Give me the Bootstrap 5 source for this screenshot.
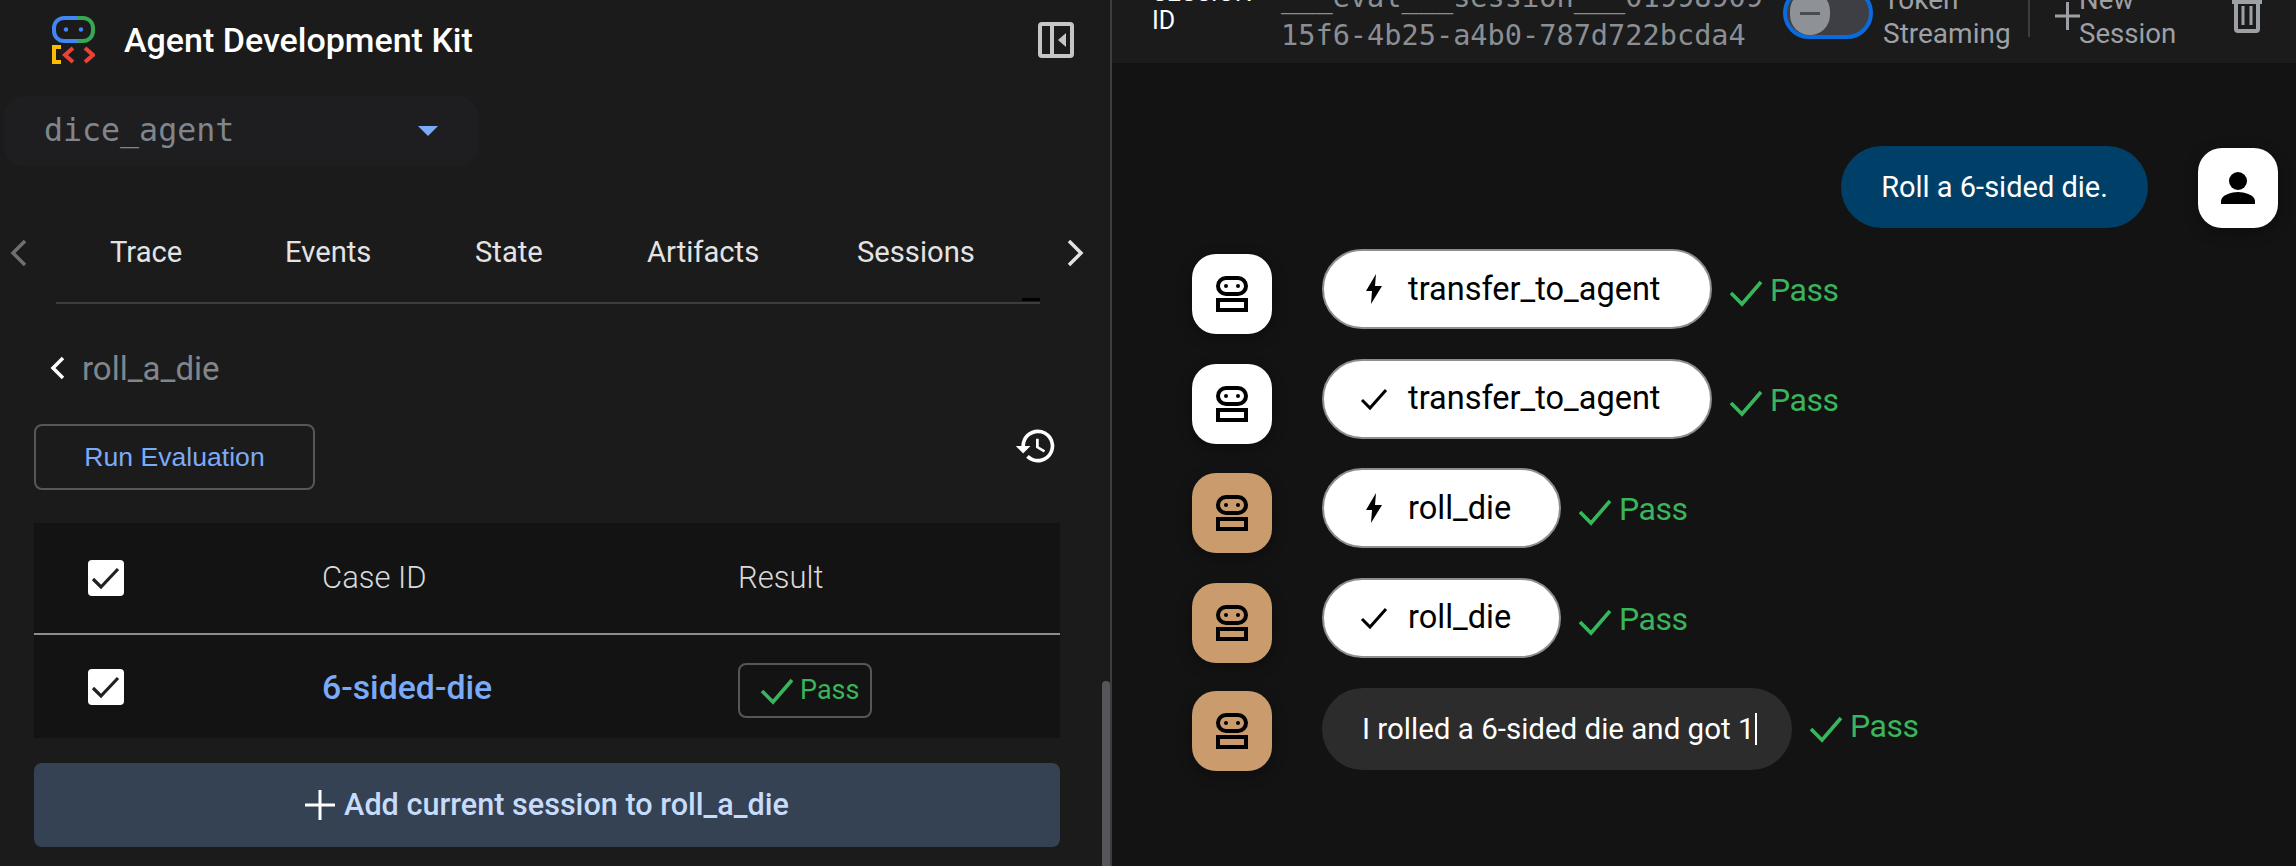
<!doctype html>
<html lang="en">
<head>
<meta charset="utf-8">
<title>Agent Development Kit</title>
<link href="https://cdn.jsdelivr.net/npm/bootstrap@5.3.0/dist/css/bootstrap.min.css" rel="stylesheet">
<style>
html,body{height:100%;margin:0;background:#131313;overflow:hidden;font-family:Roboto,"Noto Sans",sans-serif;}
.app-shell{height:866px;width:2296px;overflow:hidden;}
.side-panel{width:1112px;flex:none;height:866px;background:#1b1b1b;border-right:2px solid #3c3d40;position:relative;overflow:hidden;}
.brand-row{height:80px;padding-left:52px;padding-right:36px;}
.brand-logo{width:43px;height:48px;}
.brand-name{font-size:34px;font-weight:500;color:#fff;margin-left:29px;line-height:1;}
.panel-toggle{width:36px;height:36px;}
.agent-select{width:474px;height:70px;margin:16px 0 0 4px;background:#1e1e21;border-radius:20px;padding:0 40px 0 40px;}
.agent-name{font-family:"DejaVu Sans Mono",monospace;font-size:31.6px;color:#80868b;font-weight:400;}
.select-caret{width:20px;height:10px;}
.tabs-row{height:136px;padding:38px 26px 0 10px;}
.tabs-line{border-bottom:2px solid #3c3d40;margin-left:56px;margin-right:70px;height:0;position:relative;}
.tabs-ink{position:absolute;right:0;top:-4px;width:18px;height:3px;background:#000;}
.tab-list{flex:1;padding-left:83px;}
.tab-text{font-size:29.2px;color:#e3e3e3;padding:0;line-height:1;}
.tab-trace{width:175px;}
.tab-events{width:190px;}
.tab-state{width:172px;}
.tab-artifacts{width:210px;}
.chev-icon{width:17px;height:28px;}
.back-row{margin:42px 0 0 50px;height:44px;}
.back-label{font-size:33px;color:#80868b;margin-left:17px;line-height:1;}
.run-row{margin:34px 0 0 34px;padding-right:50px;}
.run-btn{width:281px;height:66px;border:2px solid #55575b;border-radius:8px;color:#7baaf7;font-size:26.6px;background:transparent;padding:1px 0 0;font-family:"Liberation Sans",sans-serif;}
.run-btn:hover{color:#7baaf7;border-color:#55575b;}
.history-icon{width:44px;height:44px;margin-right:2px;}
.case-table{width:1026px;margin:33px 0 0 34px;--bs-table-bg:#131313;--bs-table-color:#d5d5d5;table-layout:fixed;border-collapse:collapse;}
.case-table th,.case-table td{padding:0;vertical-align:middle;border:0;background:#131313;}
.case-table thead tr{height:111px;border-bottom:2px solid #8e8e8e;}
.case-table tbody tr{height:104px;}
.case-table th{font-size:31px;font-weight:300;color:#d9d9d9;}
.col-check{width:288px;}
.col-case{width:416px;}
.tick-box{width:36px;height:36px;background:#fff;border-radius:4px;margin-left:54px;}
.tick-box svg{width:36px;height:36px;display:block;}
.case-link{font-size:33.8px;font-weight:500;color:#7baaf7;text-decoration:none;display:inline-block;margin-top:3px;}
.pass-chip{width:134px;height:55px;border:2px solid #55575b;border-radius:8px;padding-left:20px;margin-top:8px;}
.pass-chip svg{width:34px;height:28px;}
.pass-chip span{font-size:27px;color:#39b55c;margin-left:6px;}
.add-btn{width:1026px;height:84px;margin:25px 0 0 34px;background:#344254;border:0;border-radius:8px;color:#c7dbfa;font-size:30.6px;font-weight:500;}
.add-btn:hover{background:#344254;color:#c7dbfa;}
.add-btn svg{width:30px;height:30px;margin-right:9px;}
.side-scroll{position:absolute;right:0;top:681px;bottom:0;width:8px;background:#54565a;border-radius:4px 4px 0 0;}
.main-panel{flex:1;min-width:0;background:#131313;}
.top-bar{height:63px;background:#1b1b1b;overflow:hidden;align-items:flex-end;padding-left:40px;}
.sess-label{width:120px;font-size:25px;line-height:28px;color:#fff;padding-bottom:28px;}
.sess-id{font-family:"DejaVu Sans Mono",monospace;font-size:28.6px;line-height:38px;color:#8b8f94;width:502px;margin-left:9px;padding-bottom:9px;white-space:pre;}
.token-switch{width:90px;height:52px;border:4px solid #0b6bdc;border-radius:26px;background:#3e3f44;margin-bottom:24px;padding-left:3px;flex:none;}
.token-thumb{width:40px;height:44px;border-radius:20px;background:#8e9196;}
.token-thumb i{display:block;width:20px;height:3px;background:#4a4c50;}
.tool-label{font-size:28px;line-height:34px;color:#9da0a5;}
.token-text{margin-left:10px;width:140px;padding-bottom:12px;}
.bar-sep{width:2px;height:38px;background:#3c3d40;margin:0 0 26px 5px;}
.plus-icon{width:25px;height:28px;margin:0 0 33px 25px;}
.new-text{width:100px;padding-bottom:12px;margin-left:-1px;font-size:27.6px;}
.trash-icon{width:30px;height:36px;margin:0 0 30px 53px;}
.chat-area{padding:83px 18px 0 80px;}
.user-row{height:103px;}
.user-bubble{width:307px;height:82px;border-radius:41px;background:#004068;color:#fff;font-size:29px;font-weight:400;padding-top:1px;}
.face-tile{width:80px;height:80px;border-radius:24px;flex:none;background:#fff;box-shadow:0 4px 14px rgba(0,0,0,.35);margin-top:5px;}
.face-tile.sand-tile{background:#c99b6d;}
.last-tile{margin-top:4px;}
.face-tile svg{width:44px;height:44px;}
.user-tile{margin-left:50px;margin-top:2px;}
.bot-row{height:109.5px;}
.tool-pill{height:80px;background:#fff;border:2px solid #8e8e8e;border-radius:40px;margin-left:50px;color:#000;font-size:32.5px;padding-left:36px;}
.wide-pill{width:390px;}
.short-pill{width:239px;}
.tool-pill svg{width:28px;height:30px;}
.tool-pill span{margin-left:20px;}
.pass-line{height:80px;margin-left:17px;color:#39b55c;font-size:32px;letter-spacing:-.5px;margin-top:1px;}
.last-pass{margin-top:-1px;}
.pass-line svg{width:34px;height:28px;margin-right:7px;margin-top:6px;}
.text-bubble{width:470px;height:82px;border-radius:41px;background:#2c2c2c;color:#fff;font-size:29.5px;margin-left:50px;margin-top:1px;padding-left:40px;white-space:nowrap;}
.caret-bar{display:inline-block;width:2px;height:32px;background:#fff;}
</style>
</head>
<body>
<div class="app-shell d-flex">
  <aside class="side-panel">
    <div class="brand-row d-flex align-items-center justify-content-between">
      <div class="d-flex align-items-center">
        <svg class="brand-logo" viewBox="0 0 43 48" fill="none" stroke-width="4">
          <path d="M25 2H12A10 10 0 0 0 2 12v3A10 10 0 0 0 12 25h13" stroke="#4285f4" stroke-width="4"/>
          <path d="M25 2h6A10 10 0 0 1 41 12v3A10 10 0 0 1 31 25h-6" stroke="#34a853" stroke-width="4"/>
          <circle cx="14" cy="13.500" r="2.200" fill="#4285f4"/><circle cx="29" cy="13.500" r="2.200" fill="#4285f4"/>
          <path d="M9 31H2v15h7" stroke="#fbbc04"/>
          <path d="M21 32l-8 7 8 7" stroke="#ea4335"/>
          <path d="M33 32l8 7-8 7" stroke="#ea4335"/>
        </svg>
        <span class="brand-name">Agent Development Kit</span>
      </div>
      <svg class="panel-toggle" viewBox="0 0 36 36" fill="none"><rect x="2" y="2" width="32" height="32" rx="2" stroke="#c4c7c5" stroke-width="4"/><path d="M14 2v32" stroke="#c4c7c5" stroke-width="4"/><path d="M28 11v14l-8-7z" fill="#c4c7c5"/></svg>
    </div>
    <div class="agent-select d-flex align-items-center justify-content-between">
      <span class="agent-name">dice_agent</span>
      <svg class="select-caret" viewBox="0 0 20 10"><path d="M0 0h20L10 10z" fill="#7baaf7"/></svg>
    </div>
    <div class="tabs-row d-flex align-items-center">
      <svg class="chev-icon" viewBox="0 0 17 28" fill="none"><path d="M15 2L3 14l12 12" stroke="#6d7074" stroke-width="3.500"/></svg>
      <nav class="nav tab-list">
        <a class="nav-link tab-text tab-trace" href="#">Trace</a>
        <a class="nav-link tab-text tab-events" href="#">Events</a>
        <a class="nav-link tab-text tab-state" href="#">State</a>
        <a class="nav-link tab-text tab-artifacts" href="#">Artifacts</a>
        <a class="nav-link tab-text" href="#">Sessions</a>
      </nav>
      <svg class="chev-icon" viewBox="0 0 17 28" fill="none"><path d="M2 2l12 12L2 26" stroke="#e3e3e3" stroke-width="3.500"/></svg>
    </div>
    <div class="tabs-line"><div class="tabs-ink"></div></div>
    <div class="back-row d-flex align-items-center">
      <svg width="15" height="24" viewBox="0 0 15 24" fill="none"><path d="M13 2L3 12l10 10" stroke="#fff" stroke-width="3.500"/></svg>
      <span class="back-label">roll_a_die</span>
    </div>
    <div class="run-row d-flex justify-content-between align-items-start">
      <button class="btn run-btn" type="button">Run Evaluation</button>
      <svg class="history-icon" viewBox="0 0 24 24"><path fill="#fff" d="M13 3a9 9 0 0 0-9 9H1l3.890 3.890.07.140L9 12H6a7 7 0 1 1 2.050 4.950l-1.420 1.420A9 9 0 1 0 13 3zm-1 5v5l4.280 2.540.72-1.210-3.500-2.080V8H12z"/></svg>
    </div>
    <table class="table case-table">
      <thead>
        <tr>
          <th class="col-check"><div class="tick-box"><svg viewBox="0 0 36 36" fill="none"><path d="M5 19l8 8L30 9" stroke="#202124" stroke-width="3.200"/></svg></div></th>
          <th class="col-case">Case ID</th>
          <th>Result</th>
        </tr>
      </thead>
      <tbody>
        <tr>
          <td><div class="tick-box"><svg viewBox="0 0 36 36" fill="none"><path d="M5 19l8 8L30 9" stroke="#202124" stroke-width="3.200"/></svg></div></td>
          <td><a class="case-link" href="#">6-sided-die</a></td>
          <td><div class="pass-chip d-flex align-items-center"><svg viewBox="0 0 34 28" fill="none"><path d="M2 14l11 11L32 3" stroke="#39b55c" stroke-width="3.600"/></svg><span>Pass</span></div></td>
        </tr>
      </tbody>
    </table>
    <button class="btn add-btn d-flex align-items-center justify-content-center" type="button">
      <svg viewBox="0 0 30 30"><path d="M15 0v30M0 15h30" stroke="#fff" stroke-width="3"/></svg>Add current session to roll_a_die
    </button>
    <div class="side-scroll"></div>
  </aside>
  <main class="main-panel">
    <div class="top-bar d-flex">
      <div class="sess-label">SESSION ID</div>
      <div class="sess-id">___eval___session___01998909-
15f6-4b25-a4b0-787d722bcda4</div>
      <div class="token-switch d-flex align-items-center"><div class="token-thumb d-flex align-items-center justify-content-center"><i></i></div></div>
      <div class="tool-label token-text">Token Streaming</div>
      <div class="bar-sep"></div>
      <svg class="plus-icon" viewBox="0 0 25 28"><path d="M12.500 0v28M0 14h25" stroke="#9da0a5" stroke-width="3"/></svg>
      <div class="tool-label new-text">New Session</div>
      <svg class="trash-icon" viewBox="0 0 30 36" fill="none"><path d="M0 5h30" stroke="#9da0a5" stroke-width="4"/><path d="M4 3v29a2 2 0 0 0 2 2h18a2 2 0 0 0 2-2V3" stroke="#9da0a5" stroke-width="4"/><path d="M11 9v19M19 9v19" stroke="#9da0a5" stroke-width="3"/></svg>
    </div>
    <div class="chat-area">
      <div class="user-row d-flex justify-content-end align-items-start">
        <div class="user-bubble d-flex align-items-center justify-content-center">Roll a 6-sided die.</div>
        <div class="face-tile user-tile d-flex align-items-center justify-content-center">
          <svg viewBox="0 0 44 44"><circle cx="22" cy="15" r="9" fill="#000"/><path d="M5 38v-3c0-6 11-9 17-9s17 3 17 9v3z" fill="#000"/></svg>
        </div>
      </div>
      <div class="bot-row d-flex align-items-start">
        <div class="face-tile d-flex align-items-center justify-content-center"><svg viewBox="0 0 44 44" fill="none"><rect x="8" y="6" width="28" height="16" rx="8" stroke="#000" stroke-width="4"/><circle cx="16" cy="14" r="2" fill="#000"/><circle cx="28" cy="14" r="2" fill="#000"/><rect x="8" y="28" width="28" height="10" stroke="#000" stroke-width="4"/></svg></div>
        <div class="tool-pill wide-pill d-flex align-items-center"><svg viewBox="0 0 28 30"><path d="M16 0L6 17h6l-1 13 11-18h-7z" fill="#000"/></svg><span>transfer_to_agent</span></div>
        <div class="pass-line d-flex align-items-center"><svg viewBox="0 0 34 28" fill="none"><path d="M2 14l11 11L32 3" stroke="#39b55c" stroke-width="3.600"/></svg>Pass</div>
      </div>
      <div class="bot-row d-flex align-items-start">
        <div class="face-tile d-flex align-items-center justify-content-center"><svg viewBox="0 0 44 44" fill="none"><rect x="8" y="6" width="28" height="16" rx="8" stroke="#000" stroke-width="4"/><circle cx="16" cy="14" r="2" fill="#000"/><circle cx="28" cy="14" r="2" fill="#000"/><rect x="8" y="28" width="28" height="10" stroke="#000" stroke-width="4"/></svg></div>
        <div class="tool-pill wide-pill d-flex align-items-center"><svg viewBox="0 0 28 30" fill="none"><path d="M2 16l8 8L26 6" stroke="#000" stroke-width="3"/></svg><span>transfer_to_agent</span></div>
        <div class="pass-line d-flex align-items-center"><svg viewBox="0 0 34 28" fill="none"><path d="M2 14l11 11L32 3" stroke="#39b55c" stroke-width="3.600"/></svg>Pass</div>
      </div>
      <div class="bot-row d-flex align-items-start">
        <div class="face-tile sand-tile d-flex align-items-center justify-content-center"><svg viewBox="0 0 44 44" fill="none"><rect x="8" y="6" width="28" height="16" rx="8" stroke="#000" stroke-width="4"/><circle cx="16" cy="14" r="2" fill="#000"/><circle cx="28" cy="14" r="2" fill="#000"/><rect x="8" y="28" width="28" height="10" stroke="#000" stroke-width="4"/></svg></div>
        <div class="tool-pill short-pill d-flex align-items-center"><svg viewBox="0 0 28 30"><path d="M16 0L6 17h6l-1 13 11-18h-7z" fill="#000"/></svg><span>roll_die</span></div>
        <div class="pass-line d-flex align-items-center"><svg viewBox="0 0 34 28" fill="none"><path d="M2 14l11 11L32 3" stroke="#39b55c" stroke-width="3.600"/></svg>Pass</div>
      </div>
      <div class="bot-row d-flex align-items-start">
        <div class="face-tile sand-tile d-flex align-items-center justify-content-center"><svg viewBox="0 0 44 44" fill="none"><rect x="8" y="6" width="28" height="16" rx="8" stroke="#000" stroke-width="4"/><circle cx="16" cy="14" r="2" fill="#000"/><circle cx="28" cy="14" r="2" fill="#000"/><rect x="8" y="28" width="28" height="10" stroke="#000" stroke-width="4"/></svg></div>
        <div class="tool-pill short-pill d-flex align-items-center"><svg viewBox="0 0 28 30" fill="none"><path d="M2 16l8 8L26 6" stroke="#000" stroke-width="3"/></svg><span>roll_die</span></div>
        <div class="pass-line d-flex align-items-center"><svg viewBox="0 0 34 28" fill="none"><path d="M2 14l11 11L32 3" stroke="#39b55c" stroke-width="3.600"/></svg>Pass</div>
      </div>
      <div class="bot-row d-flex align-items-start">
        <div class="face-tile sand-tile last-tile d-flex align-items-center justify-content-center"><svg viewBox="0 0 44 44" fill="none"><rect x="8" y="6" width="28" height="16" rx="8" stroke="#000" stroke-width="4"/><circle cx="16" cy="14" r="2" fill="#000"/><circle cx="28" cy="14" r="2" fill="#000"/><rect x="8" y="28" width="28" height="10" stroke="#000" stroke-width="4"/></svg></div>
        <div class="text-bubble d-flex align-items-center">I rolled a 6-sided die and got 1<span class="caret-bar"></span></div>
        <div class="pass-line last-pass d-flex align-items-center"><svg viewBox="0 0 34 28" fill="none"><path d="M2 14l11 11L32 3" stroke="#39b55c" stroke-width="3.600"/></svg>Pass</div>
      </div>
    </div>
  </main>
</div>
<script src="https://cdn.jsdelivr.net/npm/bootstrap@5.3.0/dist/js/bootstrap.bundle.min.js"></script>
</body>
</html>
